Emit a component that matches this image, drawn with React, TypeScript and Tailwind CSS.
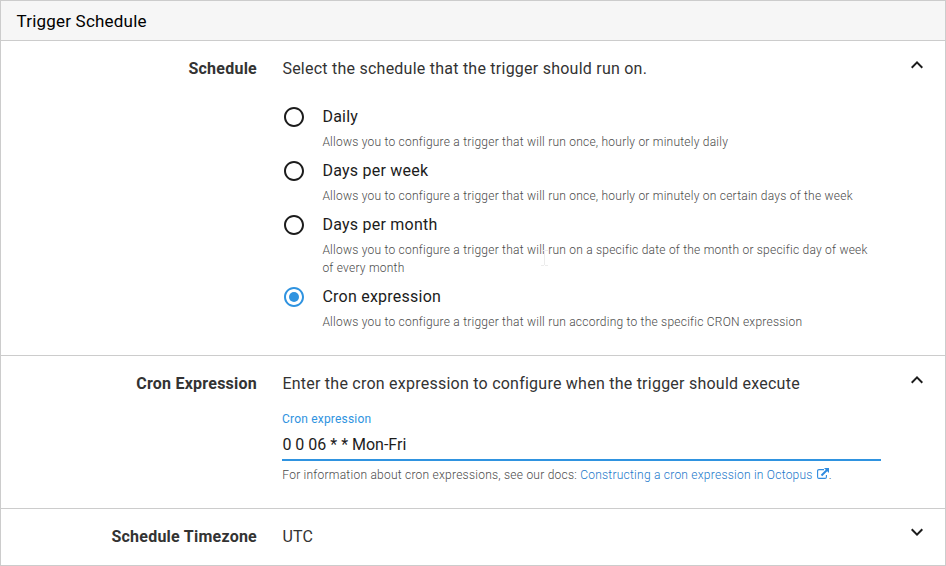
import React from "react";

const options = [
  { title: "Daily", text: "Allows you to configure a trigger that will run once, hourly or minutely daily" },
  { title: "Days per week", text: "Allows you to configure a trigger that will run once, hourly or minutely on certain days of the week" },
  { title: "Days per month", text: "Allows you to configure a trigger that will run on a specific date of the month or specific day of week of every month" },
  { title: "Cron expression", text: "Allows you to configure a trigger that will run according to the specific CRON expression", checked: true },
];

function Radio({ checked }: { checked?: boolean }) {
  return (
    <svg viewBox="0 0 24 24" className={`h-6 w-6 shrink-0 ${checked ? "text-[#2f93e0]" : "text-[#1c1c1c]"}`} fill="currentColor">
      <path d="M12 2C6.48 2 2 6.48 2 12s4.480 10 10 10 10-4.480 10-10S17.520 2 12 2zm0 18c-4.420 0-8-3.580-8-8s3.580-8 8-8 8 3.580 8 8-3.580 8-8 8z" />
      {checked && <circle cx="12" cy="12" r="5" />}
    </svg>
  );
}

function Chevron({ up }: { up?: boolean }) {
  return (
    <svg viewBox="0 0 24 24" className="h-6 w-6" fill="#1c1c1c">
      <path d={up ? "M12 8l-6 6 1.410 1.410L12 10.830l4.590 4.580L18 14z" : "M16.590 7.590L12 12.170 7.410 7.590 6 9l6 6 6-6z"} />
    </svg>
  );
}

function ExternalLink() {
  return (
    <svg className="ml-1 inline h-3 w-3 align-[-1px]" viewBox="0 0 12 12" fill="none" stroke="#2f8be0">
      <path strokeWidth="1.1" d="M7 1.600H2Q.6 1.600 .6 3v6Q.6 10.400 2 10.400h6Q9.400 10.400 9.400 9V7" />
      <path strokeWidth="2" d="M10.500 1.500L4.500 7.500" />
      <path fill="#2f8be0" stroke="none" d="M7 0H12v5z" />
    </svg>
  );
}

function TextCursor() {
  return (
    <svg className="absolute top-[249px] left-[540px] h-4 w-[7px]" viewBox="0 0 7 16" fill="none" stroke="#ececec">
      <path d="M0 .5h3M4 .5h3M3.500 1v14M0 15.500h3M4 15.500h3" />
    </svg>
  );
}

function Section({ label, up, className, children }: { label: string; up?: boolean; className: string; children: React.ReactNode }) {
  return (
    <section className={`flex border-b border-[#ccc] pt-4 ${className}`}>
      <h3 className="w-[256px] shrink-0 text-right leading-6 font-bold">{label}</h3>
      <div className="ml-[25px] w-[599px] shrink-0">{children}</div>
      <div className="-mt-1 ml-6">
        <Chevron up={up} />
      </div>
    </section>
  );
}

export default function App() {
  return (
    <main className="relative h-[566px] w-[946px] overflow-hidden border border-[#ccc] bg-white font-['Roboto',sans-serif] text-base tracking-[0.24px] text-[#333]">
      <header className="h-10 border-b border-[#ccc] bg-[#f6f6f6] pt-px pl-[15.5px] text-[17px] leading-[39px] tracking-[0.2px] text-black">Trigger Schedule</header>
      <Section label="Schedule" up className="h-[315px]">
        <p className="pl-[0.4px] leading-6">Select the schedule that the trigger should run on.</p>
        <div className="mt-6">
          {options.map((o) => (
            <div key={o.title} className="flex">
              <Radio checked={o.checked} />
              <div className="ml-4 w-[550px] pl-[0.4px]">
                <p className="leading-6 text-[#1c1c1c]">{o.title}</p>
                <p className="pt-1 pb-2 text-xs leading-[18px] font-light tracking-[0.23px] text-[#4a4a4a]">{o.text}</p>
              </div>
            </div>
          ))}
        </div>
      </Section>
      <Section label="Cron Expression" up className="h-[153px]">
        <p className="pl-[0.4px] leading-6">Enter the cron expression to configure when the trigger should execute</p>
        <div className="mt-3.5 text-xs leading-[18px] tracking-[0.2px] text-[#2f93e0]">Cron expression</div>
        <div className="h-[33px] border-b-2 border-[#2f93e0] pt-[5px] pl-[0.4px] leading-6 tracking-normal text-[#1c1c1c]">0 0 06 * * Mon-Fri</div>
        <p className="pt-[5px] pl-[0.3px] text-xs leading-[18px] font-light text-[#4a4a4a]">
          For information about cron expressions, see our docs: <a className="text-[#1a77ca]">Constructing a cron expression in Octopus</a>
          <ExternalLink />.
        </p>
      </Section>
      <Section label="Schedule Timezone" className="h-[57px]">
        <p className="pl-[0.4px] leading-6">UTC</p>
      </Section>
      <TextCursor />
    </main>
  );
}
